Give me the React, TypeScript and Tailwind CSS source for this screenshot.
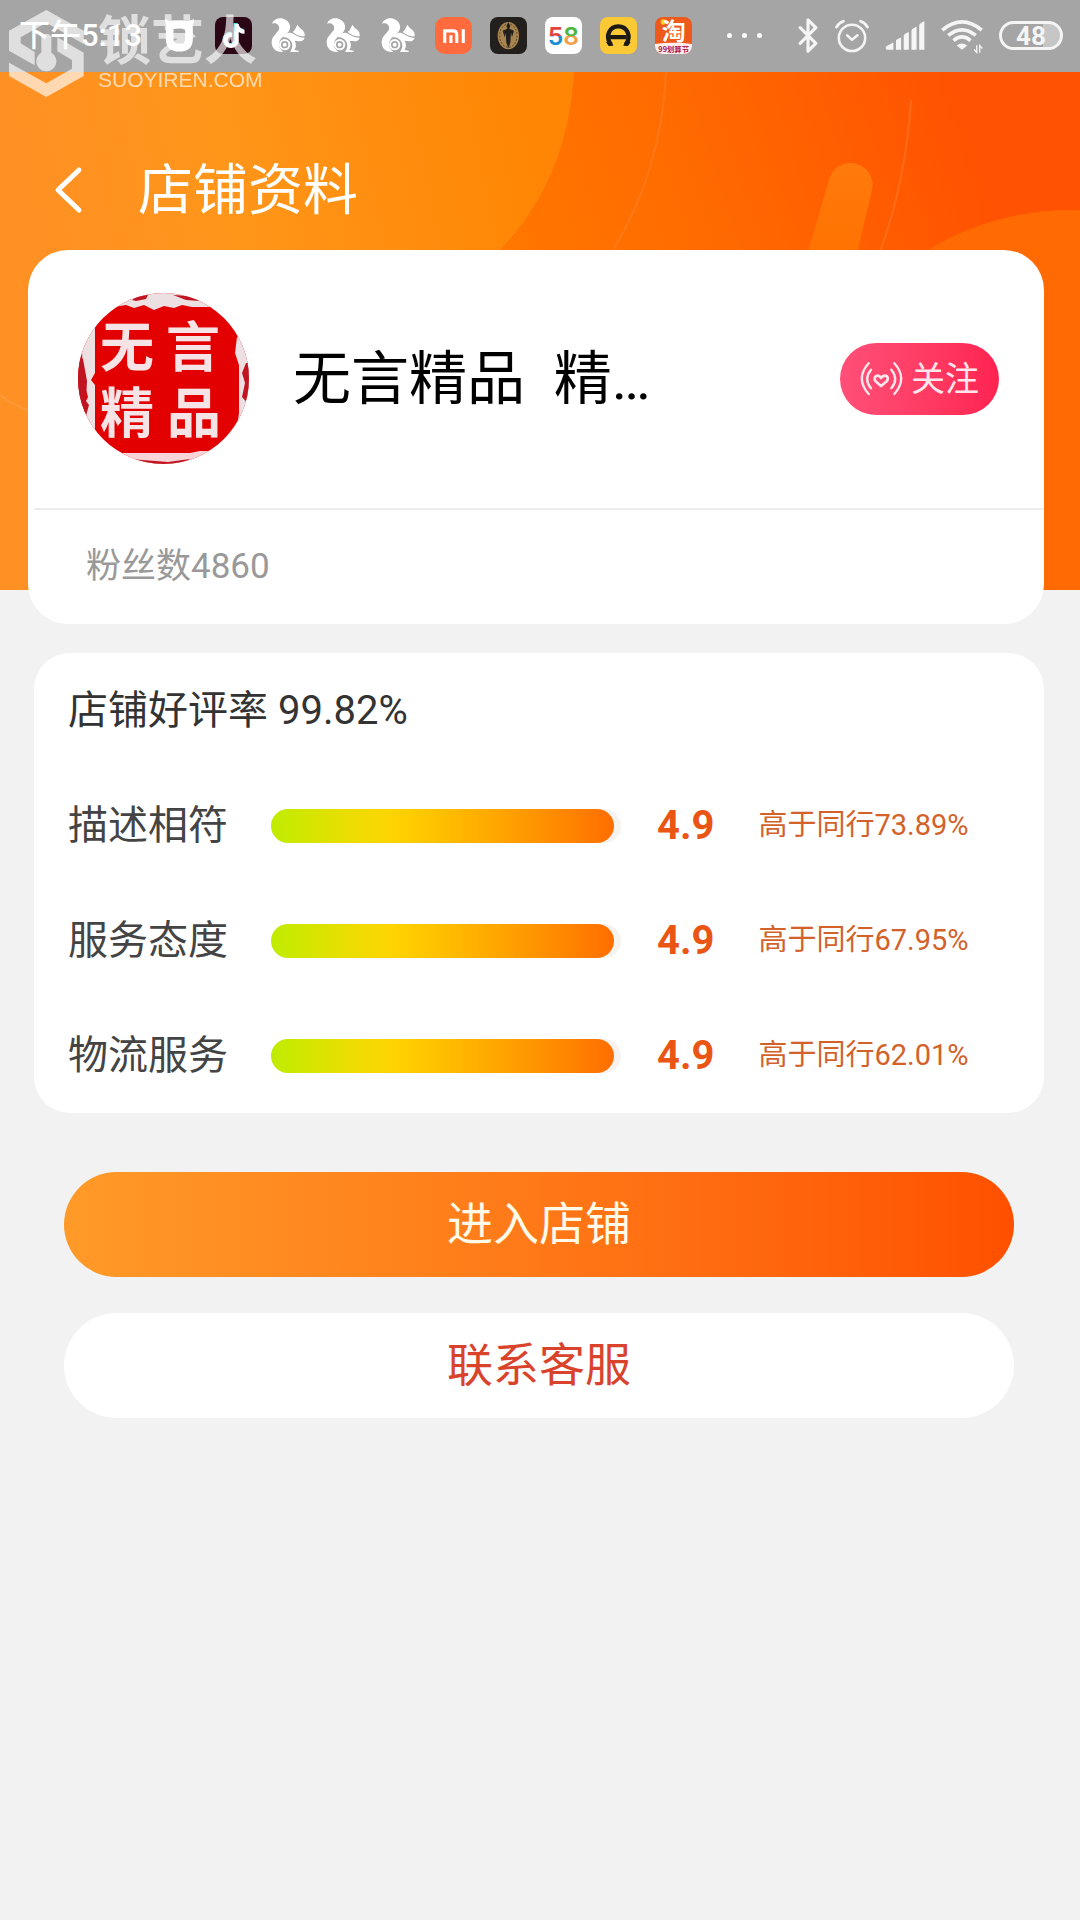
import React from 'react';
import { Bluetooth } from 'lucide-react';
import { FaTiktok } from 'react-icons/fa6';

const ratings = [
  { label: '描述相符', score: 4.9, compare: '高于同行73.89%' },
  { label: '服务态度', score: 4.9, compare: '高于同行67.95%' },
  { label: '物流服务', score: 4.9, compare: '高于同行62.01%' },
];

const SquirrelIcon = () => (
  <svg viewBox="30 51 111 111" className="size-[37px]" fill="white">
    <path d="M36 71C42 54 64 50 78 60C94 71 94 89 81 100C73 107 67 111 62 118C54 130 56 146 70 156C48 158 35 145 35 127C35 108 52 100 57 88C60 76 49 66 36 71Z" />
    <path d="M98 96C105 91 107 84 112 74L120 85C130 90 136 100 134 109C121 110 108 105 98 96Z" />
    <path d="M68 112C74 102 84 97 94 99C106 102 114 114 134 113C132 121 126 124 118 124L104 122C110 134 108 143 103 150L116 152V156H90C99 144 99 131 92 122C86 114 77 110 68 112Z" />
    <circle cx="74" cy="134" r="17" fill="#a5a5a5" />
    <circle cx="74" cy="134" r="14" fill="none" stroke="white" strokeWidth="6" />
    <circle cx="74" cy="134" r="6" />
  </svg>
);

const AppIcons = () => (
  <div className="flex items-center gap-[18px]">
    <svg viewBox="480 51 111 111" className="size-[37px]" fill="none">
      <path d="M509 84V116Q509 143 538 143Q567 143 567 116V84Q567 74 538 74Q509 74 509 84Z" stroke="white" strokeWidth="23" />
      <path d="M495 57Q508 66 524 64L506 90Q495 78 495 57ZM582 57Q568 66 552 64L570 90Q582 78 582 57Z" fill="white" />
    </svg>
    <div className="grid size-[37px] place-items-center rounded-lg bg-[#2b0716]">
      <FaTiktok className="size-6 text-white drop-shadow-[-1px_-1px_0_#5fe0e6]" />
    </div>
    <SquirrelIcon />
    <SquirrelIcon />
    <SquirrelIcon />
    <div className="grid size-[37px] place-items-center rounded-[10px] bg-[#ff6b3d]">
      <svg viewBox="548 86 64 40" className="h-[14px] w-[22px]" fill="none" stroke="white" strokeWidth="9">
        <path d="M553 126V91H577Q588 91 588 102V126M571 104V126M607 86V126" />
      </svg>
    </div>
    <svg viewBox="690 51 111 111" className="size-[37px]">
      <rect x="690" y="51" width="111" height="111" rx="24" fill="#221f1d" />
      <ellipse cx="745" cy="107" rx="32" ry="41" fill="#a8854e" />
      <ellipse cx="745" cy="107" rx="26" ry="35" fill="none" stroke="#5d482b" strokeWidth="3" strokeDasharray="6 4" />
      <path d="M745 67L751 78L748 86L762 92L756 112L753 98L751 128L745 145L739 128L737 98L734 112L728 92L742 86L739 78Z" fill="#221f1d" />
    </svg>
    <svg viewBox="45 51 111 111" className="size-[37px]">
      <defs>
        <linearGradient id="five" gradientUnits="userSpaceOnUse" x1="0" y1="82" x2="0" y2="138">
          <stop offset="46%" stopColor="#e5413f" />
          <stop offset="46%" stopColor="#1e8fd0" />
        </linearGradient>
        <linearGradient id="eight" gradientUnits="userSpaceOnUse" x1="0" y1="82" x2="0" y2="138">
          <stop offset="46%" stopColor="#4fb53c" />
          <stop offset="46%" stopColor="#f0a04a" />
        </linearGradient>
      </defs>
      <rect x="45" y="51" width="111" height="111" rx="24" fill="white" />
      <text x="100" y="136" fontSize="74" textAnchor="middle" className="font-[Inter] font-semibold">
        <tspan fill="url(#five)">5</tspan>
        <tspan fill="url(#eight)">8</tspan>
      </text>
    </svg>
    <svg viewBox="210 51 111 111" className="size-[37px]">
      <rect x="210" y="51" width="111" height="111" rx="24" fill="#fbc936" />
      <path d="M241 132C226 108 238 79 265 79C292 79 304 108 289 132" fill="none" stroke="#1d1a14" strokeWidth="13" />
      <path d="M240 105H290V118H240ZM228 126L246 126L250 137L236 138ZM302 126L284 126L280 137L294 138Z" fill="#1d1a14" />
    </svg>
    <svg viewBox="375 51 111 111" className="size-[37px]">
      <defs>
        <clipPath id="tb"><rect x="375" y="51" width="111" height="111" rx="24" /></clipPath>
      </defs>
      <g clipPath="url(#tb)">
        <rect x="375" y="51" width="111" height="111" fill="#ee5a1c" />
        <path d="M375 132Q430 124 486 132V162H375Z" fill="#fdeef0" />
        <circle cx="400" cy="66" r="8" fill="#ffd21f" />
      </g>
      <text x="431" y="121" fontSize="72" textAnchor="middle" fill="white" className="font-['Noto_Sans_CJK_SC'] font-bold">淘</text>
      <text x="431" y="156" fontSize="22" textAnchor="middle" fill="#b0124a" className="font-['Noto_Sans_CJK_SC'] font-bold">99划算节</text>
    </svg>
  </div>
);

const SystemIcons = () => (
  <div className="ml-auto flex items-center gap-4 text-[#f5f5f5]">
    <Bluetooth className="h-[35px] w-[22px]" strokeWidth={2} viewBox="5 1 14 22" />
    <svg viewBox="168 54 106 108" className="h-9 w-[34px]" fill="none" stroke="currentColor" strokeWidth="8" strokeLinecap="round">
      <circle cx="221" cy="114" r="41" />
      <path d="M206 106L221 120L238 106" strokeLinejoin="round" />
      <path d="M173 80Q180 67 194 62M269 80Q262 67 248 62" strokeWidth="9" />
    </svg>
    <svg viewBox="313 60 124 92" className="h-[31px] w-10" fill="currentColor">
      <path d="M315 146Q314 140 320 138L339 128V150H318ZM347 122Q347 118 363 112V150H347ZM371 107Q371 101 387 95V150H371ZM395 91Q395 86 411 79V150H395ZM419 75Q419 69 435 62V150H419Z" />
    </svg>
    <svg viewBox="482 58 128 108" className="h-9 w-[42px]" fill="none" stroke="currentColor" strokeWidth="11">
      <path d="M486 94Q546 44 606 94M504 110Q546 76 588 110M520 126Q546 104 572 126" />
      <path d="M530 141Q546 129 562 141L546 154Z" fill="currentColor" stroke="none" />
      <path d="M591 140V162L583 153M600 163V141L608 150" strokeWidth="4" />
    </svg>
    <div className="flex h-[29px] w-16 items-center justify-center rounded-full border-3 border-[#f5f5f5] bg-linear-to-r from-[#a5a5a5] from-70% to-[#c6c6c6] to-70% text-[26px] leading-none font-bold">
      48
    </div>
  </div>
);

const StatusBar = () => (
  <div className="flex h-[72px] items-center bg-[#a5a5a5] pr-[17px] pb-px pl-[19px]">
    <span className="w-[141px] shrink-0 text-[31px] leading-10 font-medium whitespace-nowrap text-white">下午5:13</span>
    <AppIcons />
    <div className="ml-[35px] flex gap-[10px]">
      <i className="size-[5px] rounded-full bg-white" />
      <i className="size-[5px] rounded-full bg-white" />
      <i className="size-[5px] rounded-full bg-white" />
    </div>
    <SystemIcons />
  </div>
);

const Watermark = () => (
  <div className="pointer-events-none absolute top-[10px] left-[9px] flex gap-[14px] text-white opacity-65">
    <svg viewBox="27 30 225 261" className="h-[87px] w-[75px]" fill="currentColor">
      <path d="M139 30L251 92V132L139 68L62 112V130L104 156V196L27 152V92Z" />
      <path d="M124 112A16 16 0 0 1 154 112V158A30 30 0 1 1 124 158Z" />
      <path d="M172 112L251 158V228L139 291L27 228V188L139 250L216 206V180L172 154Z" />
    </svg>
    <div className="pt-1.5">
      <div className="text-[53px] leading-[53px] font-bold">锁艺人</div>
      <div className="font-['Liberation_Sans'] text-[21px] leading-none">SUOYIREN.COM</div>
    </div>
  </div>
);

const Backdrop = () => (
  <svg viewBox="0 0 1080 590" preserveAspectRatio="none" className="absolute inset-x-0 top-0 h-[590px] w-full">
    <defs>
      <linearGradient id="base" gradientUnits="userSpaceOnUse" x1="480" y1="240" x2="960" y2="90">
        <stop offset="0%" stopColor="#ff7800" />
        <stop offset="45%" stopColor="#ff6a00" />
        <stop offset="100%" stopColor="#ff5202" />
      </linearGradient>
      <linearGradient id="bubble" gradientUnits="userSpaceOnUse" x1="40" y1="300" x2="540" y2="200">
        <stop offset="0%" stopColor="#ff9024" />
        <stop offset="40%" stopColor="#ff961a" />
        <stop offset="100%" stopColor="#ff8604" />
      </linearGradient>
      <linearGradient id="pill" x1="0" y1="0" x2="0" y2="1">
        <stop offset="0%" stopColor="#ff7a0c" />
        <stop offset="100%" stopColor="#ff7200" />
      </linearGradient>
    </defs>
    <rect width="1080" height="590" fill="url(#base)" />
    <path d="M0 0H574V72C570 140 548 200 500 250L160 590H0Z" fill="url(#bubble)" />
    <path d="M0 395Q12 404 30 411" fill="none" stroke="#ff9a38" strokeWidth="2" />
    <path d="M666 72Q662 170 612 252M911 100Q906 180 880 252" fill="none" stroke="#ff8a3c" strokeOpacity="0.4" strokeWidth="2" />
    <path d="M829 180A22 22 0 0 1 872 190L855 262H805Z" fill="url(#pill)" />
    <circle cx="1070" cy="482" r="272" fill="#ff6a02" />
  </svg>
);

const Avatar = () => (
  <svg viewBox="0 0 171 171" className="size-[171px] shrink-0 rounded-full" role="img" aria-label="无言精品">
    <rect width="171" height="171" fill="#e20000" />
    <path d="M30 15L48 12L56 15L66 12L76 17L86 13L96 15L104 12L114 14L140 14V0H30Z" fill="#ece0e2" />
    <path d="M54 7Q60 2 70 2L68 6L58 8ZM95 2L112 3L122 8L108 7Z" fill="#c01420" />
    <path d="M17 28V80L13 87L17 92V136L9 138L6 112L10 104L5 86L4 58L8 40Z" fill="#ece0e2" />
    <path d="M0 62L5 66L9 88L8 108L11 112L6 130L0 110Z" fill="#c01420" />
    <path d="M159 44L157 60L161 72V120L158 140L171 120V40Z" fill="#ece0e2" />
    <path d="M168 70L164 80L167 90L164 104L171 112V70Z" fill="#c01420" />
    <path d="M36 160H112L122 158H140V171H30Z" fill="#f8d4d8" />
    <path d="M52 166L90 169L112 166L104 171H60Z" fill="#c01420" />
    <g fill="#f6e3e6" fontSize="54" textAnchor="middle" className="font-['Noto_Sans_CJK_SC'] font-bold">
      <text x="49" y="74">无</text>
      <text x="115" y="74">言</text>
      <text x="49" y="140">精</text>
      <text x="116" y="140">品</text>
    </g>
  </svg>
);

const FollowIcon = () => (
  <svg viewBox="122 124 129 108" className="h-9 w-[43px]" fill="none" stroke="currentColor" strokeWidth="8" strokeLinecap="round" strokeLinejoin="round">
    <path d="M185 199L168 184Q163 174 170 169Q179 165 185 175Q192 165 202 169Q208 175 203 184Z" />
    <path d="M155 150Q132 178 155 206M216 150Q239 178 216 206" strokeWidth="7" />
    <path d="M148 131Q107 176 148 223M225 131Q266 176 225 223" strokeWidth="7" />
  </svg>
);

const App: React.FC = () => {
  return (
    <div className="relative min-h-screen bg-[#f2f2f2] font-[Roboto,'Noto_Sans_CJK_SC',sans-serif]">
      <Backdrop />
      <div className="relative">
        <StatusBar />
        <Watermark />

        <header className="flex h-[178px] items-center pt-[58px] pl-[50px] text-white">
          <button type="button" aria-label="返回" className="mr-[52px]">
            <svg viewBox="0 0 36 48" className="h-12 w-9" fill="none" stroke="currentColor" strokeWidth="5" strokeLinecap="round" strokeLinejoin="round">
              <path d="M29 4L8 24L29 44" />
            </svg>
          </button>
          <h1 className="text-[55px] leading-[64px]">店铺资料</h1>
        </header>

        <section className="mr-9 ml-7 rounded-[40px] bg-white">
          <div className="ml-1.5 flex h-[260px] items-center border-b-2 border-[#ededed] pr-[45px] pb-px pl-11">
            <Avatar />
            <h2 className="ml-11 text-[58px] leading-[68px] whitespace-pre text-black">无言精品  精…</h2>
            <button type="button" className="ml-auto flex h-[72px] items-center gap-2 rounded-full bg-linear-to-r from-[#ff4f78] to-[#ff2250] px-5 text-[34px] leading-10 whitespace-nowrap text-[#ffe6ec]">
              <FollowIcon />
              关注
            </button>
          </div>
          <p className="px-[58px] py-8 text-[35px] leading-[50px] text-[#999999]">粉丝数4860</p>
        </section>

        <section className="mt-[29px] mr-9 ml-[34px] rounded-[36px] bg-white px-[34px]">
          <h3 className="flex h-[115px] items-center text-[40px] text-[#333333]">店铺好评率 99.82%</h3>
          {ratings.map((item) => (
            <div key={item.label} className="flex h-[115px] items-center">
              <span className="shrink-0 text-[40px] text-[#444444]">{item.label}</span>
              <div className="ml-[43px] h-[34px] w-[350px] rounded-full bg-[#f5f2ef]">
                <div
                  className="h-full rounded-full bg-linear-to-r from-[#bfec00] via-[#ffd500] via-35% to-[#ff6d00]"
                  style={{ width: `${(item.score / 5) * 100}%` }}
                />
              </div>
              <span className="ml-9 text-[40px] font-bold text-[#ea5514]">{item.score}</span>
              <span className="ml-11 text-[29px] whitespace-nowrap text-[#d2622a]">{item.compare}</span>
            </div>
          ))}
        </section>

        <div className="mt-[59px] flex flex-col gap-9 pr-[66px] pl-16 text-[46px]">
          <button type="button" className="h-[105px] rounded-full bg-linear-to-r from-[#ff9a28] to-[#ff5000] text-[#fffbe8]">
            进入店铺
          </button>
          <button type="button" className="h-[105px] rounded-full bg-white text-[#d9432c]">
            联系客服
          </button>
        </div>
      </div>
    </div>
  );
};

export default App;
